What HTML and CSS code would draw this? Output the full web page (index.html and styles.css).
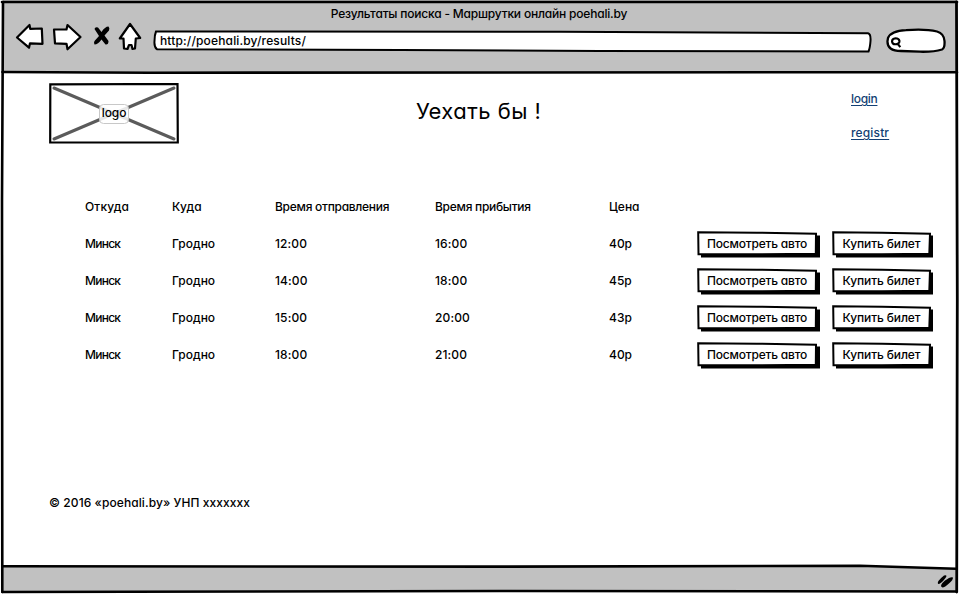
FILE: index.html
```html
<!DOCTYPE html>
<html lang="ru">
<head>
<meta charset="utf-8">
<title>Результаты поиска</title>
<link rel="stylesheet" href="styles.css">
</head>
<body>
<svg class="symbols" width="0" height="0">
  <symbol id="auto-shape" viewBox="0 0 124 27">
    <path d="M119 4.500 L123 4.500 L123 26.500 L4 26.500 L4 22 L119 22 Z"/>
    <path d="M1.200 1.300 L60 1.700 L119 2.800 L118.800 22.700 L60 23.200 L1.500 23.300 Z" fill="#fff" stroke="#000" stroke-width="2"/>
  </symbol>
  <symbol id="buy-shape" viewBox="0 0 103 27">
    <path d="M97 4.500 L101 4.500 L101 26.500 L4 26.500 L4 22 L97 22 Z"/>
    <path d="M1.200 1.300 L50 1.700 L98 2.800 L97.300 22.700 L50 23.200 L1.500 23.300 Z" fill="#fff" stroke="#000" stroke-width="2"/>
  </symbol>
</svg>
<div class="window">
  <header class="chrome">
    <div class="title"><span>Результаты поиска - Маршрутки онлайн poehali.by</span></div>
    <div class="toolbar">
      <svg class="nav" width="130" height="32" viewBox="14 21 130 32">
        <g fill="#fff" stroke="#000" stroke-width="2.200" stroke-linejoin="round">
          <path d="M17 37.500 L29.500 25 L30.200 28.800 L41.800 28.500 L42.500 43.800 L30 43.300 L29 47.700 Z"/>
          <path d="M54 29.500 L66.500 29.500 L67.500 25 L80.500 37 L67.500 49.300 L66.500 43.800 L55 43.300 Z"/>
          <path d="M130 24 L140.200 38 L135.800 38.500 L135 48.500 L132.500 49 L131.500 45 L129 45 L127.500 49 L124 48.500 L123.500 38.500 L119.800 38.500 Z"/>
        </g>
        <path d="M94.500 29 Q95 26.500 98 27.500 L101.500 32 Q105 26.500 108.500 26.500 Q110 28 109 30.500 L104.500 35.500 L108.500 41 Q108.500 45 105.500 44.500 L101.500 39.500 Q98 44.500 94.500 44.500 Q93.500 42.500 94.500 41 L99 36 Z"/>
      </svg>
      <div class="address">
        <svg class="outline" width="720" height="24" viewBox="153 29 720 24">
          <path d="M156 31.500 L560 31.700 L868 33.300 Q871 34 870.500 41 Q870 48 868.500 51.500 L600 51 L400 50 L157 49.300 Q154 47 154.500 41 Q154.500 35 156 31.500 Z" fill="#fff" stroke="#000" stroke-width="2"/>
        </svg>
        <span class="url">http://poehali.by/results/</span>
      </div>
      <svg class="search" width="62" height="28" viewBox="885 28 62 28">
        <path d="M888 38 Q891 31 906 30.200 Q925 28.700 937 31.500 Q944 33.500 944.500 41 Q945 48 942 49.500 Q934 52 920 51.700 L901 51 Q887 51 887.500 41 Z" fill="#fff" stroke="#000" stroke-width="2.300"/>
        <path d="M899.500 41 Q899 38.200 895.500 38.200 Q892 38.500 892 41.500 Q892.500 44.500 895.500 44.300 Q899.500 44 899.500 41 Z M897.500 43.500 L900.300 47.200" fill="none" stroke="#000" stroke-width="2.100"/>
      </svg>
    </div>
  </header>
  <main class="page">
    <div class="top">
      <div class="logo">
        <svg width="130" height="61" viewBox="0 0 130 61">
          <path d="M1.300 1.300 L128.500 1 L128.800 59.300 L1.200 59.500 Z" fill="#fff" stroke="#000" stroke-width="2.200"/>
          <path d="M5 5 L125 56 M125 5 L5 56" stroke="#5b5b5b" stroke-width="3" stroke-linecap="round"/>
          <rect x="50.500" y="21.500" width="29" height="19" rx="4" fill="#fff" fill-opacity=".85" stroke="#c8c8c8"/>
        </svg>
        <span class="logo-text">logo</span>
      </div>
      <h1>Уехать бы !</h1>
      <nav class="account"><a class="login">login</a><a>registr</a></nav>
    </div>
    <div class="results">
      <div class="row"><span class="wide">Откуда</span><span class="wide">Куда</span><span class="tight">Время отправления</span><span class="tight">Время прибытия</span><span>Цена</span></div>
      <div class="row"><span class="city">Минск</span><span>Гродно</span><span class="time">12:00</span><span class="time">16:00</span><span>40р</span><button class="auto"><svg><use href="#auto-shape"/></svg><span>Посмотреть авто</span></button><button class="buy"><svg><use href="#buy-shape"/></svg><span>Купить билет</span></button></div>
      <div class="row"><span class="city">Минск</span><span>Гродно</span><span class="time">14:00</span><span class="time">18:00</span><span>45р</span><button class="auto"><svg><use href="#auto-shape"/></svg><span>Посмотреть авто</span></button><button class="buy"><svg><use href="#buy-shape"/></svg><span>Купить билет</span></button></div>
      <div class="row"><span class="city">Минск</span><span>Гродно</span><span class="time">15:00</span><span class="time">20:00</span><span>43р</span><button class="auto"><svg><use href="#auto-shape"/></svg><span>Посмотреть авто</span></button><button class="buy"><svg><use href="#buy-shape"/></svg><span>Купить билет</span></button></div>
      <div class="row"><span class="city">Минск</span><span>Гродно</span><span class="time">18:00</span><span class="time">21:00</span><span>40р</span><button class="auto"><svg><use href="#auto-shape"/></svg><span>Посмотреть авто</span></button><button class="buy"><svg><use href="#buy-shape"/></svg><span>Купить билет</span></button></div>
    </div>
    <p class="copyright">© 2016 «poehali.by» УНП xxxxxxx</p>
  </main>
  <svg class="frame" width="959" height="594" viewBox="0 0 959 594">
    <path d="M3 566.500 L860 565.800 L957 569 L957 592 L3 592 Z" fill="#c1c1c1"/>
    <g fill="none" stroke="#000" stroke-linecap="round">
      <path d="M2 2 L957 2" stroke-width="2.600"/>
      <path d="M3 2 L2 200 L2.300 592" stroke-width="2.600"/>
      <path d="M956.500 2 L957.300 300 L956.700 592" stroke-width="2.800"/>
      <path d="M2.500 72 L150 72.700 L957 72.200" stroke-width="2.600"/>
      <path d="M3 566.300 L500 566.600 L860 565.800 L956 568.800" stroke-width="2.600"/>
      <path d="M2.500 592 L500 591 L956 591.500" stroke-width="2.600"/>
    </g>
    <path d="M938 584 Q936.500 581.500 944 575.500 Q948 574.500 945.500 578 Q941 584 938 584 Z M942.500 587.500 Q938.500 586 945 580.500 Q951 576 953 577.500 Q953 580 949.500 583 Q944.500 587.500 942.500 587.500 Z"/>
  </svg>
</div>
</body>
</html>
```
FILE: styles.css
```css
* { box-sizing: border-box; }
body {
  margin: 0;
  background: #fff;
  color: #000;
  font: 500 12px/18px Inter, "Open Sans", sans-serif;
  font-feature-settings: "cv11";
}
.symbols { display: none; }
.window {
  position: relative;
  width: 959px;
  height: 594px;
  overflow: hidden;
  display: flex;
  flex-direction: column;
}
.frame { position: absolute; inset: 0; pointer-events: none; }
.chrome {
  height: 73px;
  padding-top: 4px;
  background: #c1c1c1;
  margin: 0 2px 0 3px;
}
.title { height: 17px; padding-right: 2px; text-align: center; line-height: 20px; letter-spacing: -0.2px; }
.toolbar { display: flex; align-items: flex-start; padding-left: 11px; }
.address { position: relative; margin: 8px 0 0 9px; width: 720px; height: 24px; }
.outline { position: absolute; inset: 0; }
.url { position: relative; display: block; padding: 2px 0 0 7px; line-height: 20px; letter-spacing: 0.15px; }
.search { margin: 7px 0 0 12px; }
.page { flex: 1; }
.top { display: flex; height: 115px; padding: 10px 0 0 49px; }
.logo { position: relative; width: 130px; height: 61px; }
.logo svg { display: block; }
.logo-text { position: absolute; inset: 0; text-align: center; line-height: 59px; letter-spacing: -0.1px; }
h1 { margin: 13px 0 0 237px; width: 435px; font-size: 22px; line-height: 30px; font-weight: 400; letter-spacing: 0.45px; }
.account { display: flex; flex-direction: column; gap: 16px; padding-top: 7px; color: #123f74; letter-spacing: 0.15px; }
.account a { text-decoration: underline; text-underline-offset: 2px; }
.account .login { letter-spacing: -0.3px; }
.row {
  display: grid;
  grid-template-columns: 87px 103px 160px 174px 88px 135px 103px;
  height: 37px;
  align-items: center;
  padding: 1px 0 0 85px;
  white-space: nowrap;
}
.wide { letter-spacing: 0.15px; }
.tight { letter-spacing: -0.28px; }
.city { letter-spacing: -0.75px; }
.time { letter-spacing: 0.12px; }
button {
  position: relative;
  height: 27px;
  padding: 0 4px 0 0;
  border: 0;
  background: none;
  color: #000;
  font: inherit;
  font-feature-settings: inherit;
  white-space: nowrap;
}
button svg { position: absolute; inset: 0; width: 100%; height: 100%; }
button span { position: relative; }
.auto { width: 124px; letter-spacing: -0.2px; }
.buy { width: 103px; letter-spacing: -0.12px; }
.copyright { margin: 121px 0 0 49px; letter-spacing: 0.08px; }
```
